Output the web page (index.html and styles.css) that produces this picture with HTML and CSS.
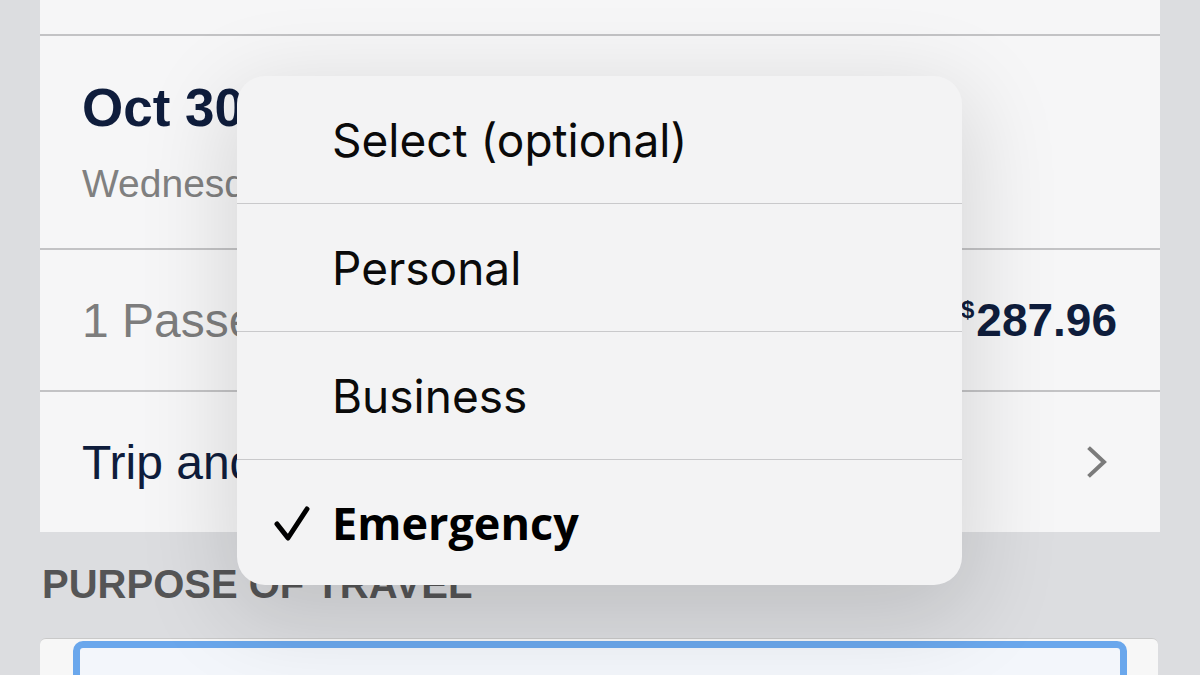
FILE: index.html
```html
<!DOCTYPE html>
<html lang="en">
<head>
<meta charset="utf-8">
<title>Purpose of travel</title>
<link rel="stylesheet" href="styles.css">
</head>
<body>
<div class="page">
  <div class="card">
    <div class="row row-top"></div>
    <div class="row row-date">
      <div class="date">Oct 30</div>
      <div class="weekday">Wednesday</div>
    </div>
    <div class="row row-pax">
      <span class="pax">1 Passenger</span>
      <span class="price"><span class="cur">$</span>287.96</span>
    </div>
    <div class="row row-trip">
      <span class="trip">Trip and baggage details</span>
      <svg class="chev" width="24" height="34" viewBox="0 0 24 34"><path d="M4 4 L18 17 L4 30" fill="none" stroke="#7b7b7b" stroke-width="4" stroke-linecap="square"/></svg>
    </div>
  </div>
  <div class="section-title">PURPOSE OF TRAVEL</div>
  <div class="field-wrap">
    <div class="field"></div>
  </div>
</div>

<div class="menu">
  <div class="item">Select (optional)</div>
  <div class="item">Personal</div>
  <div class="item">Business</div>
  <div class="item item-selected">
    <svg class="check" width="40" height="40" viewBox="0 0 40 40"><path d="M4 20 L15 34 L34 5" fill="none" stroke="#000" stroke-width="5" stroke-linecap="round" stroke-linejoin="round"/></svg>
    Emergency
  </div>
</div>
</body>
</html>
```

FILE: styles.css
```css
html, body {
  margin: 0;
  padding: 0;
}
body {
  width: 1200px;
  height: 675px;
  overflow: hidden;
  background: #dcdde0;
  font-family: "Liberation Sans", Arial, sans-serif;
  position: relative;
}
.page {
  padding: 0 40px;
  display: flex;
  flex-direction: column;
}
.card {
  background: #f6f6f7;
  display: flex;
  flex-direction: column;
}
.row {
  border-bottom: 2px solid #c3c3c5;
  padding: 0 43px 0 42px;
  display: flex;
  align-items: center;
  justify-content: space-between;
}
.row-top {
  height: 34px;
}
.row-date {
  flex-direction: column;
  align-items: flex-start;
  justify-content: flex-start;
  height: 214px;
  padding-top: 40px;
  box-sizing: border-box;
}
.date {
  font-weight: 700;
  font-size: 53px;
  line-height: 64px;
  color: #0f1d3c;
}
.weekday {
  margin-top: 20px;
  font-size: 39px;
  line-height: 47px;
  color: #808080;
}
.row-pax {
  height: 140px;
}
.pax {
  font-size: 48px;
  color: #7d7d7d;
}
.price {
  font-size: 46px;
  font-weight: 700;
  color: #0f1d3c;
}
.cur {
  font-size: 24px;
  vertical-align: 18px;
  margin-right: 2px;
}
.row-trip {
  height: 140px;
  border-bottom: none;
  padding-right: 50px;
}
.trip {
  font-size: 48px;
  color: #0f1d3c;
}
.chev {
  display: block;
}
.section-title {
  margin: 28px 0 0 2px;
  font-size: 40px;
  line-height: 48px;
  font-weight: 700;
  color: #555556;
}
.field-wrap {
  margin-top: 30px;
  margin-right: 2px;
  background: #f7f7f7;
  border-radius: 6px;
  border-top: 1px solid #c9c9c9;
  padding: 2px 31px 0 33px;
  height: 80px;
}
.field {
  height: 100px;
  border: 7px solid #6aa7ec;
  border-radius: 10px;
  background: #f3f6fb;
}
.menu {
  position: absolute;
  left: 237px;
  top: 76px;
  width: 725px;
  height: 509px;
  background: #f3f3f4;
  border-radius: 28px;
  box-shadow: 0 24px 90px 10px rgba(0, 0, 0, 0.13);
  display: flex;
  flex-direction: column;
  overflow: hidden;
}
.item {
  height: 127px;
  flex: none;
  display: flex;
  align-items: center;
  padding-left: 95px;
  position: relative;
  font-family: Inter, "Liberation Sans", sans-serif;
  font-size: 46px;
  color: #0a0a0a;
  border-bottom: 1px solid #c9c9cb;
}
.item-selected {
  border-bottom: none;
  height: 125px;
  font-family: "Open Sans", "Noto Sans", sans-serif;
  font-size: 45px;
  font-weight: 700;
  color: #000;
}
.check {
  position: absolute;
  left: 36px;
  top: 44px;
}
```
